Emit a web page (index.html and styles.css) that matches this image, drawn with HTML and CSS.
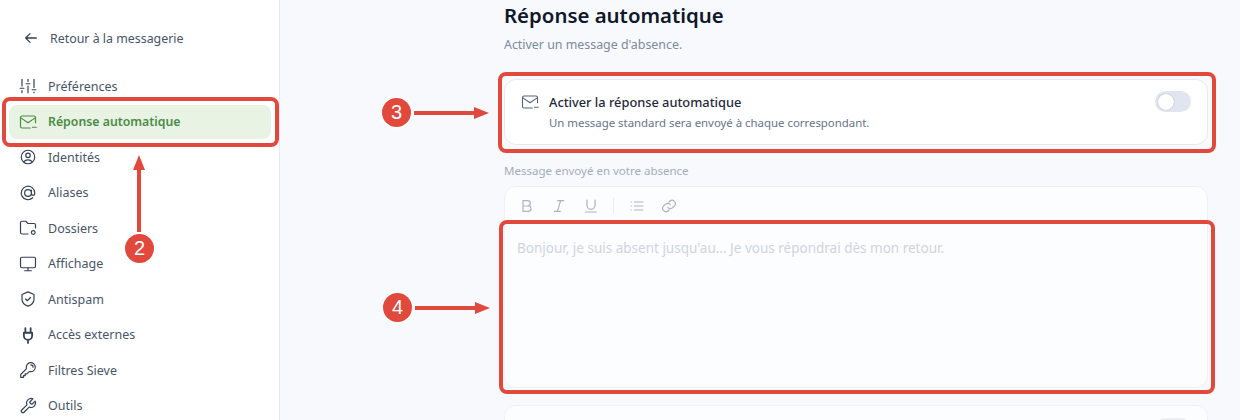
FILE: index.html
```html
<!DOCTYPE html>
<html lang="fr">
<head>
<meta charset="utf-8">
<title>Réponse automatique</title>
<link rel="stylesheet" href="styles.css">
</head>
<body>
<div class="app">
  <aside class="sidebar">
    <a class="back">
      <svg class="ic-back" viewBox="0 0 24 24"><path d="M20 12H4M10.500 5.500 4 12l6.500 6.500"/></svg>
      <span>Retour à la messagerie</span>
    </a>
    <nav class="nav">
      <a class="item"><svg viewBox="0 0 24 24"><path d="M4 3v9M4 18v3M12 3v3M12 12v9M20 3v11M20 20v1M1.500 15h5M9.500 9h5M17.500 17h5"/></svg><span>Préférences</span></a>
      <a class="item active"><svg viewBox="0 0 24 24"><path d="M22 13V6a2 2 0 0 0-2-2H4a2 2 0 0 0-2 2v12a2 2 0 0 0 2 2h11"/><path d="m2.500 6.500 9.500 6.500 9.500-6.500M18 19h5"/></svg><span>Réponse automatique</span></a>
      <a class="item"><svg viewBox="0 0 24 24"><path d="M17.982 18.725A7.488 7.488 0 0 0 12 15.750a7.488 7.488 0 0 0-5.982 2.975m11.963 0a9 9 0 1 0-11.963 0m11.963 0A8.966 8.966 0 0 1 12 21a8.966 8.966 0 0 1-5.982-2.275M15 9.750a3 3 0 1 1-6 0 3 3 0 0 1 6 0z"/></svg><span>Identités</span></a>
      <a class="item"><svg viewBox="0 0 24 24"><path d="M16.500 12a4.500 4.500 0 1 1-9 0 4.500 4.500 0 0 1 9 0zm0 0c0 1.657 1.007 3 2.250 3S21 13.657 21 12a9 9 0 1 0-2.636 6.364M16.500 12V8.250"/></svg><span>Aliases</span></a>
      <a class="item"><svg viewBox="0 0 24 24"><path d="M12 20H4a2 2 0 0 1-2-2V5a2 2 0 0 1 2-2h5l3 3h8a2 2 0 0 1 2 2v4"/><circle class="fill" cx="19" cy="18" r="2.500"/></svg><span>Dossiers</span></a>
      <a class="item"><svg viewBox="0 0 24 24"><rect x="2" y="3" width="20" height="14" rx="2"/><path d="M12 17v4M7.500 21h9"/></svg><span>Affichage</span></a>
      <a class="item"><svg viewBox="0 0 24 24"><path d="M12 2.500 20 6v6c0 5-3.500 8-8 9.500-4.500-1.500-8-4.500-8-9.500V6z"/><path d="m8.800 12 2.300 2.300 4.200-4.300"/></svg><span>Antispam</span></a>
      <a class="item"><svg class="bold" viewBox="0 0 24 24"><path d="M8.500 3v6M15.500 3v6M6.500 9h11v4a5.500 5.500 0 0 1-11 0zM12 18.500v4"/></svg><span>Accès externes</span></a>
      <a class="item"><svg viewBox="0 0 24 24"><path d="M15.750 5.250a3 3 0 0 1 3 3m3 0a6 6 0 0 1-7.029 5.912c-.563-.097-1.159.026-1.563.430L10.500 17.250H8.250v2.250H6v2.250H2.250v-2.818c0-.597.237-1.170.659-1.591l6.499-6.499c.404-.404.527-1 .430-1.563A6 6 0 1 1 21.750 8.250z"/></svg><span>Filtres Sieve</span></a>
      <a class="item"><svg viewBox="0 0 24 24"><path d="M14.700 6.300a1 1 0 0 0 0 1.400l1.600 1.600a1 1 0 0 0 1.400 0l3.800-3.800a6 6 0 0 1-7.900 7.900l-6.900 6.900a2.100 2.100 0 0 1-3-3l6.900-6.900a6 6 0 0 1 7.900-7.900z"/></svg><span>Outils</span></a>
    </nav>
  </aside>

  <main class="main">
    <div class="content">
      <h1>Réponse automatique</h1>
      <p class="sub">Activer un message d'absence.</p>

      <section class="card">
        <svg class="card-ic" viewBox="0 0 24 24"><path d="M22 13V6a2 2 0 0 0-2-2H4a2 2 0 0 0-2 2v12a2 2 0 0 0 2 2h11"/><path d="m2.500 6.500 9.500 6.500 9.500-6.500M18 19h5"/></svg>
        <div class="card-text">
          <div class="card-title">Activer la réponse automatique</div>
          <div class="card-desc">Un message standard sera envoyé à chaque correspondant.</div>
        </div>
        <span class="toggle"><span class="knob"></span></span>
      </section>

      <div class="faded">
        <label class="label">Message envoyé en votre absence</label>
        <div class="editor">
          <div class="toolbar">
            <svg viewBox="0 0 24 24"><path d="M6 4h7a4 4 0 0 1 0 8H6zM6 12h8a4 4 0 0 1 0 8H6z"/></svg>
            <svg viewBox="0 0 24 24"><path d="M10 4h9M5 20h9M14.500 4l-5 16"/></svg>
            <svg viewBox="0 0 24 24"><path d="M6 3v8a6 6 0 0 0 12 0V3M4 21h16"/></svg>
            <i class="sep"></i>
            <svg viewBox="0 0 24 24"><path d="M8 6h13M8 12h13M8 18h13M3 6h.5M3 12h.5M3 18h.5"/></svg>
            <svg viewBox="0 0 24 24"><path d="M10 14a5 5 0 0 0 7.500.5l3-3a5 5 0 0 0-7-7l-1.700 1.700"/><path d="M14 10a5 5 0 0 0-7.500-.5l-3 3a5 5 0 0 0 7 7l1.700-1.700"/></svg>
          </div>
          <div class="placeholder">Bonjour, je suis absent jusqu'au... Je vous répondrai dès mon retour.</div>
        </div>
        <section class="card-next">
          <span class="toggle dim"></span>
        </section>
      </div>
    </div>
  </main>
</div>

<div class="mark mark-nav"></div>
<div class="mark mark-toggle"></div>
<div class="mark mark-editor"></div>
<svg class="arrows" viewBox="0 0 1240 420">
  <path d="M139 232V170M414 113h61M415 308h61"/>
  <polygon points="139,155 133,170 145,170"/>
  <polygon points="489,113 474,107 474,119"/>
  <polygon points="490,308 475,302 475,314"/>
</svg>
<div class="badge badge-2">2</div>
<div class="badge badge-3">3</div>
<div class="badge badge-4">4</div>
</body>
</html>
```

FILE: styles.css
```css
* { box-sizing: border-box; }
html, body { margin: 0; height: 420px; overflow: hidden; }
body {
  position: relative;
  font-family: "Noto Sans", "Liberation Sans", sans-serif;
  color: #475569;
  background: #f8f9fc;
}
svg { fill: none; stroke: currentColor; stroke-width: 2; stroke-linecap: round; stroke-linejoin: round; }

.app { display: flex; height: 420px; overflow: hidden; }

.sidebar {
  flex: 0 0 280px;
  height: 420px;
  overflow: hidden;
  background: #fff;
  border-right: 1px solid #e6e9f0;
  padding: 27px 8px 0 9px;
}
.back {
  display: flex;
  align-items: center;
  gap: 11px;
  height: 22px;
  padding-left: 14px;
  font-size: 12.400px;
  color: #475569;
}
.ic-back { width: 16px; height: 16px; color: #334155; stroke-width: 1.900; flex: none; }

.nav { display: flex; flex-direction: column; gap: 1.500px; margin-top: 20px; }
.item {
  display: flex;
  align-items: center;
  flex: none;
  gap: 11px;
  height: 34px;
  padding-left: 10px;
  border-radius: 8px;
  font-size: 12.500px;
  color: #475569;
}
.item svg { width: 18px; height: 18px; flex: none; color: #334155; stroke-width: 1.600; }
.item svg.bold { stroke-width: 2.400; }
.item .fill { fill: #fff; }
.item.active { background: #e8f3e4; color: #4a8c46; font-weight: 600; font-size: 12.300px; }
.item.active svg { color: #4a8c46; }

.main { flex: 1; height: 420px; overflow: hidden; }
.content { width: 704px; margin-left: 224px; }

h1 {
  margin: 0;
  padding-top: 1px;
  font-size: 20.400px;
  line-height: 28px;
  font-weight: 600;
  color: #0f172a;
}
.sub { margin: 7px 0 0; font-size: 12.400px; line-height: 18px; color: #7c8aa0; }

.card {
  display: flex;
  align-items: flex-start;
  height: 66px;
  margin-top: 25px;
  padding: 11px 16px 0 16px;
  background: #fff;
  border: 1px solid #e6e9f0;
  border-radius: 12px;
}
.card-ic { width: 18px; height: 18px; margin: 2px 10px 0 0; color: #55657d; stroke-width: 1.500; flex: none; }
.card-text { flex: 1; padding-top: 1px; }
.card-title { font-size: 12.800px; line-height: 20px; font-weight: 500; color: #1e293b; }
.card-desc { font-size: 11.400px; line-height: 16px; margin-top: 3px; color: #64748b; }

.toggle {
  display: block;
  width: 36px;
  height: 21px;
  border-radius: 11px;
  background: #e0e5ee;
  padding: 2.500px;
  flex: none;
}
.knob {
  display: block;
  width: 16px;
  height: 16px;
  border-radius: 50%;
  background: #fff;
  box-shadow: 0 0 1px rgba(15, 23, 42, .4);
}

.faded { margin-top: 17px; }
.label { display: block; font-size: 11.500px; line-height: 18px; color: #a3adbd; }
.editor {
  height: 202px;
  margin-top: 6px;
  background: #fcfdfe;
  border: 1px solid #eff1f6;
  border-radius: 12px;
}
.toolbar {
  display: flex;
  align-items: center;
  gap: 16px;
  height: 37px;
  padding: 0 0 0 14px;
  color: #a9b4c4;
}
.toolbar svg { width: 16px; height: 16px; stroke-width: 1.800; }
.sep { width: 1px; height: 16px; background: #eaedf2; margin: 0 -1px 0 -2px; }
.placeholder { padding: 14px 0 0 12px; font-size: 13.500px; line-height: 20px; color: #cfd5df; }

.card-next {
  display: flex;
  justify-content: flex-end;
  height: 40px;
  margin-top: 17px;
  padding: 12px 16px 0 0;
  background: #fcfdfe;
  border: 1px solid #eff1f6;
  border-radius: 12px;
}
.toggle.dim { background: #eceef3; }

/* Annotations drawn over the screenshot */
.mark {
  position: absolute;
  border: 4px solid #e2493d;
  border-radius: 8px;
}
.mark-nav { left: 2px; top: 97px; width: 277px; height: 50px; }
.mark-toggle { left: 498px; top: 72px; width: 718px; height: 81px; }
.mark-editor { left: 499px; top: 220px; width: 716px; height: 174px; }

.arrows { position: absolute; left: 0; top: 0; width: 1240px; height: 420px; color: #e2493d; stroke-width: 4; stroke-linecap: butt; }
.arrows polygon { fill: currentColor; stroke: none; }

.badge {
  position: absolute;
  display: flex;
  align-items: center;
  justify-content: center;
  width: 29px;
  height: 29px;
  border-radius: 50%;
  background: #e2493d;
  box-shadow: 0 0 0 1.500px #fff;
  color: #fff;
  font-family: "Liberation Sans", sans-serif;
  font-size: 20px;
}
.badge-2 { left: 125px; top: 234px; }
.badge-3 { left: 382px; top: 98px; }
.badge-4 { left: 383px; top: 293px; }
```
